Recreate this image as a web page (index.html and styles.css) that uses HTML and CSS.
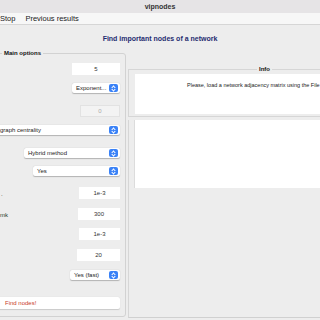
FILE: index.html
```html
<!DOCTYPE html>
<html>
<head>
<meta charset="utf-8">
<link rel="stylesheet" href="styles.css">
</head>
<body>
<div class="titlebar">vipnodes</div>
<div class="menubar"><span>Stop</span><span>Previous results</span></div>
<div class="header">Find important nodes of a network</div>
<div class="main">
  <fieldset class="left">
    <legend>Main options</legend>
    <div class="grid">
      <div class="row"><span class="label"></span><div class="field w48">5</div></div>
      <div class="row"><span class="label"></span><div class="popup w48"><span>Exponent...</span><i class="step"></i></div></div>
      <div class="row"><span class="label"></span><div class="field dis w40">0</div></div>
      <div class="row"><div class="popup wide"><span>graph centrality</span><i class="step"></i></div></div>
      <div class="row"><span class="label"></span><div class="popup w96"><span>Hybrid method</span><i class="step"></i></div></div>
      <div class="row"><span class="label"></span><div class="popup w87"><span>Yes</span><i class="step"></i></div></div>
      <div class="row"><span class="label lab-dot">.</span><div class="field w41">1e-3</div></div>
      <div class="row"><span class="label lab-mk">mk</span><div class="field w42">300</div></div>
      <div class="row"><span class="label"></span><div class="field w41">1e-3</div></div>
      <div class="row"><span class="label"></span><div class="field w43">20</div></div>
      <div class="row"><span class="label"></span><div class="popup w50"><span>Yes (fast)</span><i class="step"></i></div></div>
      <div class="row"><div class="button">Find nodes!</div></div>
    </div>
  </fieldset>
  <div class="right">
    <fieldset class="info">
      <legend>Info</legend>
      <div class="infobox">Please, load a network adjacency matrix using the File</div>
    </fieldset>
    <div class="results">
      <div class="plot"></div>
    </div>
  </div>
</div>
</body>
</html>
```
FILE: styles.css
```css
html, body {
  margin: 0;
  padding: 0;
}
body {
  width: 320px;
  height: 320px;
  overflow: hidden;
  background: #ededed;
  font-family: "Liberation Sans", Arial, sans-serif;
  color: #222;
}
.titlebar {
  height: 13px;
  line-height: 13px;
  background: #e6e4e6;
  text-align: center;
  font-size: 7px;
  font-weight: bold;
  color: #333;
}
.menubar {
  height: 11px;
  line-height: 11px;
  background: #f7f7f7;
  border-bottom: 1px solid #d6d6d6;
  display: flex;
  gap: 10px;
  font-size: 7.5px;
  color: #1a1a1a;
}
.header {
  height: 24px;
  box-sizing: border-box;
  padding-top: 10px;
  text-align: center;
  font-size: 7px;
  font-weight: bold;
  color: #1f2c70;
}
.main {
  display: flex;
  height: 271px;
}
fieldset {
  margin: 0;
  min-width: 0;
}
legend {
  font-size: 6px;
  font-weight: bold;
  color: #111;
  padding: 0 2px;
  line-height: 8px;
}
.left {
  margin-left: -6px;
  width: 132px;
  flex: none;
  box-sizing: border-box;
  border: 1px solid #d2d2d2;
  border-radius: 3px;
  padding: 6px 5px 0 0;
  height: 268px;
}
.left legend {
  margin-left: 7px;
}
.grid {
  display: grid;
  grid-template-rows: 20px 22px 20px 23px 18px 21px 21px 20px 21px 21px 27px 14px;
}
.row {
  display: flex;
  align-items: flex-start;
  justify-content: flex-end;
  font-size: 6px;
}
.label {
  flex: 1;
  color: #222;
  font-size: 6px;
  line-height: 12px;
  white-space: nowrap;
  padding-left: 5px;
}
.lab-dot {
  padding-left: 6px;
  margin-top: 1px;
}
.lab-mk {
  color: #1e3a2a;
  margin-top: 1px;
}
.field {
  height: 12px;
  line-height: 12px;
  background: #fff;
  text-align: center;
  font-size: 6px;
  color: #333;
  box-sizing: border-box;
}
.field.dis {
  background: #f3f3f3;
  border: 1px solid #e2e2e2;
  color: #aaa;
  line-height: 10px;
}
.popup {
  height: 10px;
  background: #fff;
  border-radius: 2px;
  box-shadow: 0 0.5px 1px rgba(0,0,0,0.25);
  display: flex;
  align-items: center;
  justify-content: space-between;
  box-sizing: border-box;
  padding: 0 2px 0 4px;
  font-size: 6px;
  color: #222;
  white-space: nowrap;
}
.step {
  width: 9px;
  height: 8px;
  border-radius: 2px;
  background: #3a82f7;
  position: relative;
  flex: none;
}
.step::before,
.step::after {
  content: "";
  position: absolute;
  left: 3px;
  width: 2px;
  height: 2px;
  border-left: 1px solid #fff;
  border-top: 1px solid #fff;
}
.step::before {
  top: 1.5px;
  transform: rotate(45deg);
}
.step::after {
  top: 4px;
  transform: rotate(225deg);
}
.w40 { width: 40px; }
.w41 { width: 41px; }
.w42 { width: 42px; }
.w43 { width: 43px; }
.w48 { width: 48px; }
.w50 { width: 50px; }
.w87 { width: 87px; }
.w96 { width: 96px; }
.popup.wide {
  width: 125px;
  padding-left: 5px;
}
.button {
  width: 125px;
  height: 12px;
  line-height: 12px;
  background: #fff;
  border-radius: 2px;
  box-shadow: 0 0.5px 1px rgba(0,0,0,0.15);
  color: #c83a28;
  font-size: 6px;
  box-sizing: border-box;
  padding-left: 10px;
}
.right {
  flex: 1;
  margin-left: 2px;
  display: flex;
  flex-direction: column;
  padding-top: 16px;
  min-width: 0;
}
.info {
  border: 1px solid #d6d6d6;
  border-right: none;
  padding: 1px 0 2px 6px;
  width: 300px;
  box-sizing: border-box;
}
.info legend {
  margin-left: 122px;
}
.infobox {
  height: 40px;
  background: #fff;
  font-size: 5.5px;
  color: #222;
  padding: 8px 0 0 52px;
  box-sizing: border-box;
  white-space: nowrap;
}
.results {
  flex: 1;
  border-left: 1px solid #d6d6d6;
  border-bottom: 1px solid #d0d0d0;
  margin: 3px 0 2px 0;
  padding-left: 5px;
  display: flex;
  flex-direction: column;
}
.plot {
  height: 68px;
  background: #fff;
  border-left: 1px solid #dcdcdc;
}
```
